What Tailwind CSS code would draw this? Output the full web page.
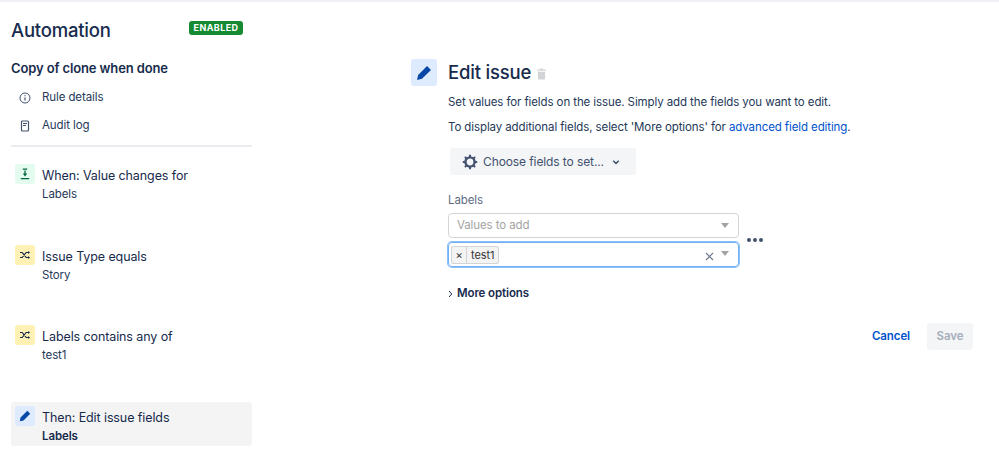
<!DOCTYPE html>
<html lang="en">
<head>
    <meta charset="UTF-8">
    <title>Automation</title>
    <script src="https://cdn.jsdelivr.net/npm/@tailwindcss/browser@4"></script>
</head>
<body class="bg-white h-[474px] overflow-hidden font-['Inter',sans-serif] text-[#172b4d] text-[11.5px] tracking-[-0.1px]">
    <div class="h-[2px] bg-[#f0f1f4]"></div>
    <div class="flex">
        <!-- sidebar -->
        <aside class="w-[241px] ml-[11px] shrink-0">
            <div class="flex items-center justify-between pt-[16px] pr-[9px] h-[40px]">
                <h1 class="text-[18.5px] font-medium leading-[24px] tracking-[-0.2px]">Automation</h1>
                <span class="w-[54px] h-[14px] text-center bg-[#168a33] text-white text-[9px] font-bold leading-[14px] tracking-[0.4px] rounded-[3px] mt-[-4px]">ENABLED</span>
            </div>
            <h2 class="text-[13px] font-semibold leading-[18px] mt-[17px] tracking-[-0.13px]">Copy of clone when done</h2>
            <div class="flex items-center h-[28px] mt-[7px] pl-[8px] gap-[11px] text-[#253858]">
                <svg class="w-[12px] h-[12px]" viewBox="0 0 12 12" fill="none" stroke="#42526e"><circle cx="6" cy="6" r="5"/><path d="M6 5.5v3M6 3.2v1" stroke-width="1.2"/></svg>
                <span>Rule details</span>
            </div>
            <div class="flex items-center h-[28px] pl-[8px] gap-[11px] text-[#253858]">
                <svg class="w-[12px] h-[12px]" viewBox="0 0 12 12" fill="none" stroke="#42526e"><rect x="2.5" y="1" width="7" height="10" rx="1" stroke-width="1.2"/><path d="M4 3.5h4M4 5.5h3" stroke-width="1.2"/></svg>
                <span>Audit log</span>
            </div>
            <div class="h-[2px] bg-[#ebecf0] mt-[5px]"></div>

            <div class="flex gap-[7px] pl-[4px] pt-[17px] h-[98px]">
                <div class="w-[20px] h-[20px] rounded-[3px] bg-[#e3fcef] flex items-center justify-center shrink-0">
                    <svg class="w-[12px] h-[12px]" viewBox="0 0 12 12" fill="none" stroke="#006644" stroke-width="1.3"><path d="M3.8 1.2h4.4M1.8 10.6h8.4"/><path d="M6 2.5v4"/><path d="M3.8 5.6h4.4L6 8.6z" fill="#006644" stroke="none"/></svg>
                </div>
                <div>
                    <div class="text-[12.5px] leading-[20px] mt-[2px]">When: Value changes for</div>
                    <div class="leading-[16px] text-[#253858]">Labels</div>
                </div>
            </div>
            <div class="flex gap-[7px] pl-[4px] h-[80px]">
                <div class="w-[20px] h-[20px] rounded-[3px] bg-[#fff0b3] flex items-center justify-center shrink-0">
                    <svg class="w-[12px] h-[12px]" viewBox="0 0 12 12" fill="none" stroke="#172b4d" stroke-width="1.2"><path d="M1 3.5h2.2l4 5H10M1 8.5h2.2l4-5H10"/><path d="M9.2 2l1.8 1.5L9.2 5zM9.2 7l1.8 1.5L9.2 10z" fill="#172b4d" stroke="none"/></svg>
                </div>
                <div>
                    <div class="text-[12.5px] leading-[20px] mt-[2px]">Issue Type equals</div>
                    <div class="leading-[16px] text-[#253858]">Story</div>
                </div>
            </div>
            <div class="flex gap-[7px] pl-[4px] h-[77px]">
                <div class="w-[20px] h-[20px] rounded-[3px] bg-[#fff0b3] flex items-center justify-center shrink-0">
                    <svg class="w-[12px] h-[12px]" viewBox="0 0 12 12" fill="none" stroke="#172b4d" stroke-width="1.2"><path d="M1 3.5h2.2l4 5H10M1 8.5h2.2l4-5H10"/><path d="M9.2 2l1.8 1.5L9.2 5zM9.2 7l1.8 1.5L9.2 10z" fill="#172b4d" stroke="none"/></svg>
                </div>
                <div>
                    <div class="text-[12.5px] leading-[20px] mt-[2px]">Labels contains any of</div>
                    <div class="leading-[16px] text-[#253858]">test1</div>
                </div>
            </div>
            <div class="flex gap-[7px] pl-[4px] pt-[4px] h-[44px] rounded-[3px] bg-[#f4f4f4]">
                <div class="w-[20px] h-[20px] rounded-[3px] bg-[#deebff] flex items-center justify-center shrink-0">
                    <svg class="w-[12px] h-[12px]" viewBox="0 0 12 12" fill="#0747a6"><path d="M8.3.8l2.9 2.9-6.7 6.7-3.7.8.8-3.7z"/></svg>
                </div>
                <div>
                    <div class="text-[12.5px] leading-[20px] mt-[2px]">Then: Edit issue fields</div>
                    <div class="leading-[16px] font-semibold">Labels</div>
                </div>
            </div>
        </aside>

        <!-- main panel -->
        <main class="ml-[159px] w-[562px] pt-[57px]">
            <div class="flex">
                <div class="w-[26px] h-[27px] rounded-[3px] bg-[#deebff] flex items-center justify-center shrink-0">
                    <svg class="w-[16px] h-[16px]" viewBox="0 0 12 12" fill="#0747a6"><path d="M8.3.8l2.9 2.9-6.7 6.7-3.7.8.8-3.7z"/></svg>
                </div>
                <div class="ml-[11px] flex-1">
                    <div class="flex items-center h-[27px]">
                        <h2 class="text-[18.5px] font-medium leading-[27px] tracking-[-0.2px]">Edit issue</h2>
                        <svg class="w-[9px] h-[12px] ml-[6px] mt-[2px]" viewBox="0 0 10 12" fill="#d2d4d8"><path d="M3.5 0h3v1H10v1.5H0V1h3.5zM1 3.5h8V11a1 1 0 0 1-1 1H2a1 1 0 0 1-1-1z"/></svg>
                    </div>
                    <p class="leading-[18px] mt-[7px] text-[#253858]">Set values for fields on the issue. Simply add the fields you want to edit.</p>
                    <p class="leading-[18px] mt-[7px] text-[#253858]">To display additional fields, select 'More options' for <span class="text-[#0052cc]">advanced field editing</span>.</p>
                    <button class="flex items-center h-[27px] w-[186px] mt-[12px] ml-[2px] pl-[12px] rounded-[3px] bg-[#f4f5f7] text-[#42526e] text-[12px]">
                        <svg class="w-[16px] h-[16px]" viewBox="0 0 16 16" fill="none" stroke="#42526e" stroke-width="2.4"><circle cx="8" cy="8" r="4.6"/><path stroke-width="2" d="M8 .8v2.4M8 12.8v2.4M.8 8h2.4M12.8 8h2.4M2.9 2.9l1.7 1.7M11.4 11.4l1.7 1.7M2.9 13.1l1.7-1.7M11.4 4.6l1.7-1.7"/></svg>
                        <span class="ml-[5px]">Choose fields to set...</span>
                        <svg class="w-[8px] h-[8px] ml-[8px]" viewBox="0 0 8 8" fill="none" stroke="#42526e" stroke-width="1.5"><path d="M1.2 2.8L4 5.4l2.8-2.6"/></svg>
                    </button>
                    <div class="leading-[16px] mt-[17px] text-[#5e6c84]">Labels</div>
                    <div class="flex mt-[5px]">
                        <div class="w-[291px]">
                            <div class="h-[25px] border border-[#d4d4d4] rounded-[4px] flex items-center justify-between pl-[8px] pr-[9px] text-[#a3a3a3]">
                                <span>Values to add</span>
                                <span class="w-0 h-0 border-x-[4.5px] border-x-transparent border-t-[5px] border-t-[#a3a3a3]"></span>
                            </div>
                            <div class="h-[25px] mt-[4px] border border-[#6fb1f5] rounded-[4px] shadow-[0_0_0_1px_#8cc0f7] flex items-center pl-[2px] pr-[9px]">
                                <div class="flex h-[18px] border border-[#d4d4d4] rounded-[2px] bg-[#f4f4f4] text-[#333] text-[11px] leading-[16px]">
                                    <span class="w-[15px] text-center border-r border-[#d4d4d4]">×</span>
                                    <span class="px-[4px]">test1</span>
                                </div>
                                <svg class="w-[9px] h-[9px] ml-auto mt-[3px]" viewBox="0 0 9 9" fill="none" stroke="#6b778c" stroke-width="1.1"><path d="M1 1l7 7M8 1L1 8"/></svg>
                                <span class="ml-[7px] mb-[3px] w-0 h-0 border-x-[4.5px] border-x-transparent border-t-[5px] border-t-[#a3a3a3]"></span>
                            </div>
                        </div>
                        <div class="flex gap-[2px] ml-[8px] mt-[25px] h-[4px]">
                            <span class="w-[4px] h-[4px] rounded-full bg-[#42526e]"></span>
                            <span class="w-[4px] h-[4px] rounded-full bg-[#42526e]"></span>
                            <span class="w-[4px] h-[4px] rounded-full bg-[#42526e]"></span>
                        </div>
                    </div>
                    <div class="flex items-center mt-[18px] h-[18px] font-semibold">
                        <svg class="w-[6px] h-[8px]" viewBox="0 0 6 8" fill="none" stroke="#172b4d" stroke-width="1"><path d="M1 1l2.8 3L1 7"/></svg>
                        <span class="ml-[3px]">More options</span>
                    </div>
                    <div class="flex items-center justify-end gap-[17px] mt-[20px] font-semibold">
                        <span class="text-[#0052cc]">Cancel</span>
                        <span class="w-[46px] h-[27px] rounded-[3px] bg-[#f4f5f7] text-[#a5adba] flex items-center justify-center">Save</span>
                    </div>
                </div>
            </div>
        </main>
    </div>
</body>
</html>
